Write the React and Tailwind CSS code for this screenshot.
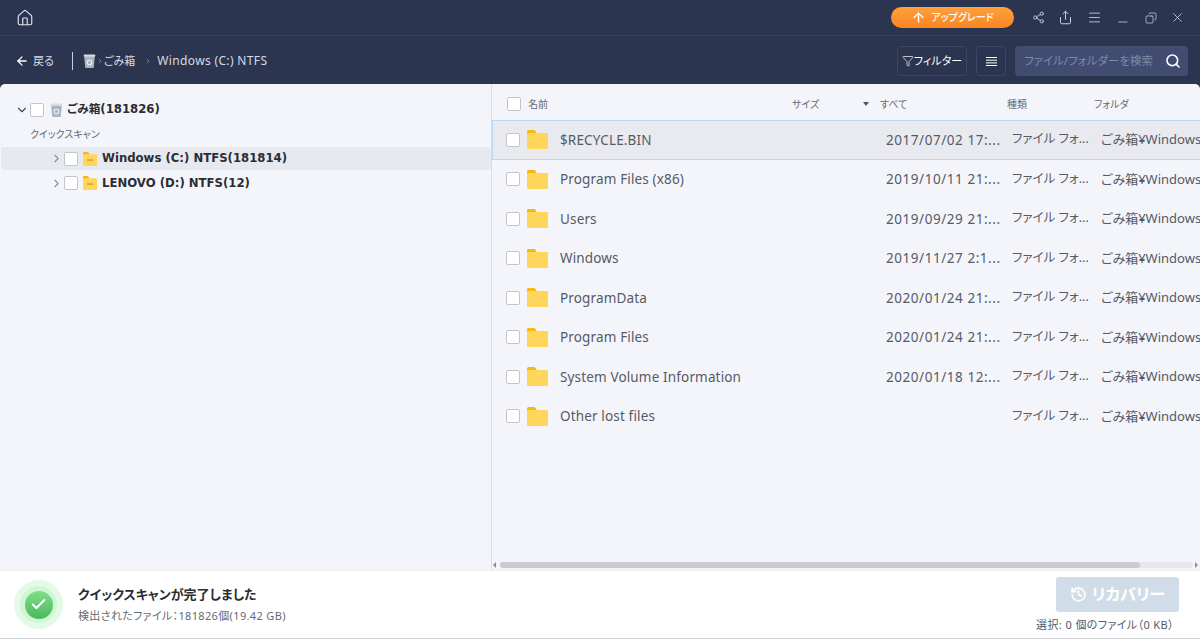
import { ArrowLeft, ArrowUp, ChevronDown, ChevronRight, Copy, Check, Filter, History, Home, Menu, Minus, Search, Share, Share2, X } from 'lucide-react';

const rows = [
  ['$RECYCLE.BIN', '2017/07/02 17:...'],
  ['Program Files (x86)', '2019/10/11 21:...'],
  ['Users', '2019/09/29 21:...'],
  ['Windows', '2019/11/27 2:1...'],
  ['ProgramData', '2020/01/24 21:...'],
  ['Program Files', '2020/01/24 21:...'],
  ['System Volume Information', '2020/01/18 12:...'],
  ['Other lost files', ''],
];

function Box({ className = '' }) {
  return <span className={`block w-[14px] h-[14px] shrink-0 bg-white border border-[#c3c5ca] rounded-[2px] ${className}`} />;
}

function Folder({ minus, w = 21, h = 19 }) {
  return (
    <svg width={w} height={h} viewBox="0 0 22 19" preserveAspectRatio="none" className="shrink-0 block">
      <path d="M0 1.5A1.5 1.5 0 0 1 1.5 0H8l2 2.5V6H0z" fill="#f5b914" />
      <rect x="0" y="3" width="22" height="16" rx="1" fill="#ffd65c" />
      {minus && <rect x="6" y="10" width="10" height="1.8" fill="#d99a10" />}
    </svg>
  );
}

function Bin({ size = 14 }) {
  return (
    <svg width={size} height={size * 1.1} viewBox="0 0 14 16" className="shrink-0 block">
      <path d="M1 2.5h12l-1.2 12.2a1.2 1.2 0 0 1-1.2 1H3.4a1.2 1.2 0 0 1-1.2-1z" fill="#a9b5c2" />
      <rect x="0.5" y="0.5" width="13" height="2.6" rx="1.2" fill="#d7dde4" />
      <circle cx="7" cy="9.5" r="2.6" fill="none" stroke="#eef1f5" strokeWidth="1.2" />
    </svg>
  );
}

export default function App() {
  return (
    <div className="w-[1200px] h-[639px] overflow-hidden flex flex-col bg-[#2b354f] [font-feature-settings:'palt'] font-['Noto_Sans','Noto_Sans_CJK_JP',sans-serif]">
      {/* Title bar */}
      <div className="h-[36px] shrink-0 flex items-center border-b border-[#343e58] pl-[16px] pr-[15px]">
        <Home size={18} strokeWidth={1.5} className="text-[#e6e8ee]" />
        <div className="ml-auto flex items-center">
          <button className="w-[123px] h-[21px] rounded-full bg-gradient-to-b from-[#ffa13c] to-[#fa8420] flex items-center justify-center gap-[5px] text-white text-[10px] font-medium">
            <ArrowUp size={15} strokeWidth={2.2} />
            アップグレード
          </button>
          <Share2 size={13} strokeWidth={1.5} className="ml-[18px] text-[#d5d9e2]" />
          <Share size={15} strokeWidth={1.5} className="ml-[13px] text-[#d5d9e2]" />
          <Menu size={15} strokeWidth={1.3} className="ml-[14px] text-[#d5d9e2]" />
          <Minus size={14} strokeWidth={1.3} className="ml-[14px] mt-[8px] text-[#d5d9e2]" />
          <Copy size={12} strokeWidth={1.4} className="ml-[15px] -scale-x-100 text-[#d5d9e2]" />
          <X size={15} strokeWidth={1.3} className="ml-[13px] text-[#d5d9e2]" />
        </div>
      </div>

      {/* Toolbar */}
      <div className="h-[48px] shrink-0 flex items-center pt-[2px] pl-[15px] pr-[12px] text-[#d6dae3] text-[11px]">
        <ArrowLeft size={14} strokeWidth={2.2} className="text-white" />
        <span className="ml-[4px]">戻る</span>
        <span className="ml-[18px] w-px h-[18px] bg-[#c9ced8]" />
        <span className="ml-[10px]"><Bin size={13} /></span>
        <ChevronRight size={8} className="text-[#8f97a9]" />
        <span>ごみ箱</span>
        <ChevronRight size={8} className="ml-[9px] text-[#8f97a9]" />
        <span className="ml-[5px] text-[12px] tracking-[0.35px]">Windows (C:) NTFS</span>
        <button className="ml-auto w-[70px] h-[30px] border border-[#3c4763] rounded-[4px] flex items-center justify-center text-white text-[11px]">
          <Filter size={12} strokeWidth={1.4} />
          フィルター
        </button>
        <button className="ml-[9px] w-[30px] h-[30px] border border-[#3c4763] rounded-[4px] flex items-center justify-center text-white">
          <svg width="11" height="9" viewBox="0 0 11 9" stroke="currentColor" strokeWidth="1"><path d="M0 .5h11M0 3.2h11M0 5.9h11M0 8.5h11" /></svg>
        </button>
        <div className="ml-[9px] w-[173px] h-[30px] bg-[#414d70] rounded-[4px] flex items-center pl-[9px] pr-[7px] text-[#7f8aa8] text-[11.5px] whitespace-nowrap">
          ファイル/フォルダーを検索
          <Search size={16} strokeWidth={2.4} className="ml-auto text-white" />
        </div>
      </div>

      {/* Main panel */}
      <div className="h-[486px] shrink-0 flex bg-[#f4f5fa] rounded-t-[5px] overflow-hidden">
        {/* Tree */}
        <div className="w-[492px] shrink-0 border-r border-[#dcdee4] pt-[16px] pl-[1px]">
          <div className="h-[20px] flex items-center pl-[14px]">
            <ChevronDown size={14} strokeWidth={2} className="text-[#444b57]" />
            <Box className="ml-[1px]" />
            <span className="ml-[6px]"><Bin size={13} /></span>
            <span className="ml-[4px] text-[11.7px] font-bold text-[#2a2d33] font-['DejaVu_Sans','Noto_Sans_CJK_JP',sans-serif]">ごみ箱(181826)</span>
          </div>
          <div className="mt-[5px] h-[18px] pl-[29px] text-[10px] leading-[18px] text-[#666b74]">クイックスキャン</div>
          <div className="mt-[4px] h-[23px] bg-[#e7e9f1] rounded-[3px] flex items-center pl-[49px]">
            <ChevronRight size={13} className="text-[#8b8e95]" />
            <Box className="ml-[1px]" />
            <span className="ml-[5px]"><Folder minus w={14} h={14} /></span>
            <span className="ml-[5px] mt-[1px] text-[11.7px] font-bold text-[#2a2d33] font-['DejaVu_Sans','Noto_Sans_CJK_JP',sans-serif]">Windows (C:) NTFS(181814)</span>
          </div>
          <div className="mt-[1px] h-[24px] flex items-center pl-[49px]">
            <ChevronRight size={13} className="text-[#8b8e95]" />
            <Box className="ml-[1px]" />
            <span className="ml-[5px]"><Folder minus w={14} h={14} /></span>
            <span className="ml-[5px] mt-[1px] text-[11.7px] font-bold text-[#2a2d33] font-['DejaVu_Sans','Noto_Sans_CJK_JP',sans-serif]">LENOVO (D:) NTFS(12)</span>
          </div>
        </div>

        {/* File list */}
        <div className="flex-1 min-w-0 flex flex-col">
          <div className="h-[36px] shrink-0 flex items-center pt-[4px] text-[10px] text-[#666b74]">
            <Box className="ml-[15px]" />
            <span className="ml-[7px] w-[264px]">名前</span>
            <span className="w-[71px]">サイズ</span>
            <span className="w-0 h-0 border-x-[3.5px] border-x-transparent border-t-[4px] border-t-[#4a5368]" />
            <span className="ml-[11px] w-[127px]">すべて</span>
            <span className="w-[87px]">種類</span>
            <span>フォルダ</span>
          </div>
          {rows.map(([name, date], i) => (
            <div
              key={name}
              className={`h-[39.5px] shrink-0 flex items-center text-[13.5px] text-[#555a66] whitespace-nowrap overflow-hidden ${i === 0 ? 'bg-[#e9eaef] border-y border-l border-[#b5d8f7]' : ''}`}
            >
              <Box className={i === 0 ? 'ml-[13px]' : 'ml-[14px]'} />
              <span className="ml-[7px]"><Folder /></span>
              <span className="ml-[12px] w-[326px] shrink-0 tracking-[0.15px]">{name}</span>
              <span className="w-[126px] shrink-0 tracking-[0.55px]">{date}</span>
              <span className="w-[89px] shrink-0 text-[12.5px]">ファイル フォ...</span>
              <span className="shrink-0 text-[13px]">ごみ箱¥Windows</span>
            </div>
          ))}
          {/* Horizontal scrollbar */}
          <div className="mt-auto mb-[2px] h-[6px] shrink-0 flex items-center">
            <span className="ml-[1px] w-0 h-0 border-y-[3px] border-y-transparent border-r-[3px] border-r-[#8b8e95]" />
            <div className="ml-[4px] flex-1 h-[6px] bg-[#e6e7ec] rounded-full">
              <div className="w-[640px] h-[6px] bg-[#c9cbd0] rounded-full" />
            </div>
            <span className="ml-[2px] mr-[2px] w-0 h-0 border-y-[3px] border-y-transparent border-l-[3px] border-l-[#8b8e95]" />
          </div>
        </div>
      </div>

      {/* Footer */}
      <div className="flex-1 bg-white border-t border-[#eceded] border-b border-b-[#cfd0d3] flex items-center pl-[14px] pr-[20px]">
        <div className="w-[49px] h-[49px] rounded-full bg-[#e3fbe6] flex items-center justify-center">
          <div className="w-[37px] h-[37px] rounded-full bg-[#d0f6d5] flex items-center justify-center">
            <div className="w-[28px] h-[28px] rounded-full bg-gradient-to-b from-[#7fe08a] to-[#49b85c] flex items-center justify-center">
              <Check size={17} strokeWidth={3} className="text-white" />
            </div>
          </div>
        </div>
        <div className="ml-[15px]">
          <div className="-mt-[1px] text-[13px] font-bold text-[#2a2d33] leading-[20px]">クイックスキャンが完了しました</div>
          <div className="mt-[4px] text-[11px] text-[#666b74] leading-[16px] tracking-[0.35px]">検出されたファイル：181826個(19.42 GB)</div>
        </div>
        <div className="ml-auto flex flex-col items-end">
          <button className="mr-[1px] w-[123px] h-[35px] bg-[#d0dde9] rounded-[3px] flex items-center justify-center gap-[5px] text-white text-[16px] font-bold">
            <History size={17} strokeWidth={2.4} />
            リカバリー
          </button>
          <div className="mt-[5px] mr-[6px] text-[11px] text-[#555a66] leading-[16px] tracking-[0.4px]">選択: 0 個のファイル（0 KB）</div>
        </div>
      </div>
    </div>
  );
}
